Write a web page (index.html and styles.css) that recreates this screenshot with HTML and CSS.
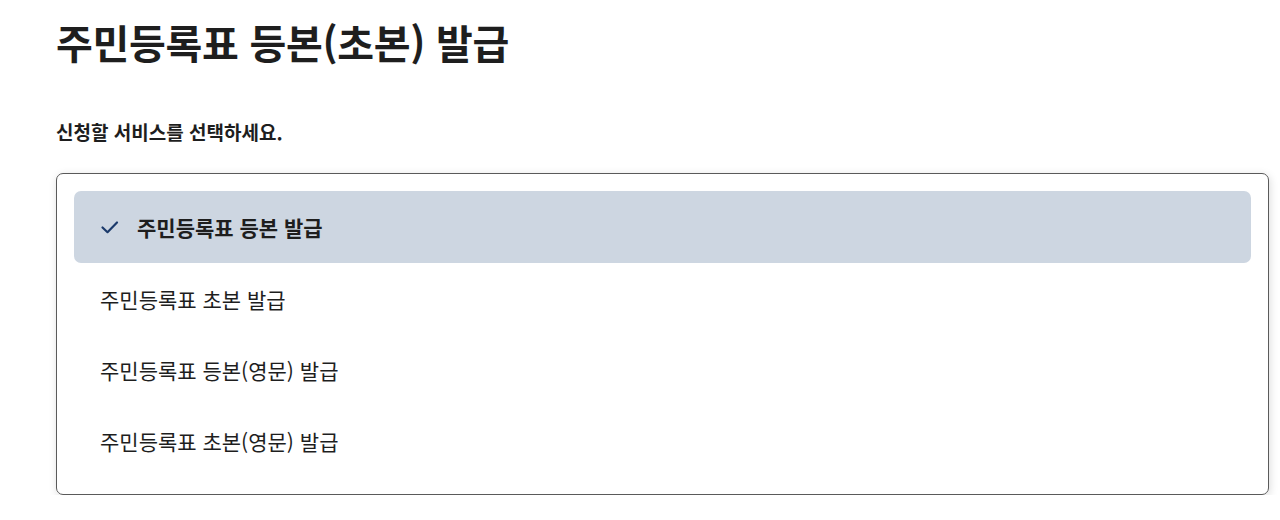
FILE: index.html
```html
<!DOCTYPE html>
<html lang="ko">
<head>
<meta charset="utf-8">
<link rel="stylesheet" href="styles.css">
</head>
<body>
<main class="page">
  <h1 class="title">주민등록표 등본(초본) 발급</h1>
  <p class="label">신청할 서비스를 선택하세요.</p>
  <ul class="listbox" role="listbox">
    <li class="option selected" role="option" aria-selected="true">
      <svg class="check" width="20" height="20" viewBox="0 0 20 20" aria-hidden="true"><path d="M2.5 10.5 L7.5 15.2 L17 5.5" fill="none" stroke="#1b3a6b" stroke-width="2.2" stroke-linecap="round" stroke-linejoin="round"/></svg>
      <span>주민등록표 등본 발급</span>
    </li>
    <li class="option" role="option"><span>주민등록표 초본 발급</span></li>
    <li class="option" role="option"><span>주민등록표 등본(영문) 발급</span></li>
    <li class="option" role="option"><span>주민등록표 초본(영문) 발급</span></li>
  </ul>
</main>
</body>
</html>
```

FILE: styles.css
```css
html, body {
  margin: 0;
  padding: 0;
  background: #ffffff;
}
body {
  font-family: "Noto Sans CJK KR", "Noto Sans", sans-serif;
  color: #1e1e1e;
}
.page {
  padding: 14px 11px 0 56px;
}
.title {
  margin: 0;
  font-size: 40px;
  font-weight: 700;
  line-height: 56px;
  letter-spacing: -0.3px;
}
.label {
  margin: 48px 0 0;
  font-size: 19px;
  font-weight: 700;
  line-height: 28px;
}
.listbox {
  list-style: none;
  margin: 27px 0 0;
  padding: 17px 17px 18px;
  border: 1px solid #5a5a5a;
  border-radius: 7px;
  box-shadow: 1px 2px 8px rgba(0,0,0,0.14);
  display: flex;
  flex-direction: column;
}
.option {
  display: flex;
  align-items: center;
  height: 71px;
  padding: 0 26px;
  font-size: 21px;
  border-radius: 7px;
}
.option.selected {
  height: 72px;
  background: #cdd6e1;
  font-weight: 700;
  gap: 17px;
}
.check {
  flex: none;
}
```
